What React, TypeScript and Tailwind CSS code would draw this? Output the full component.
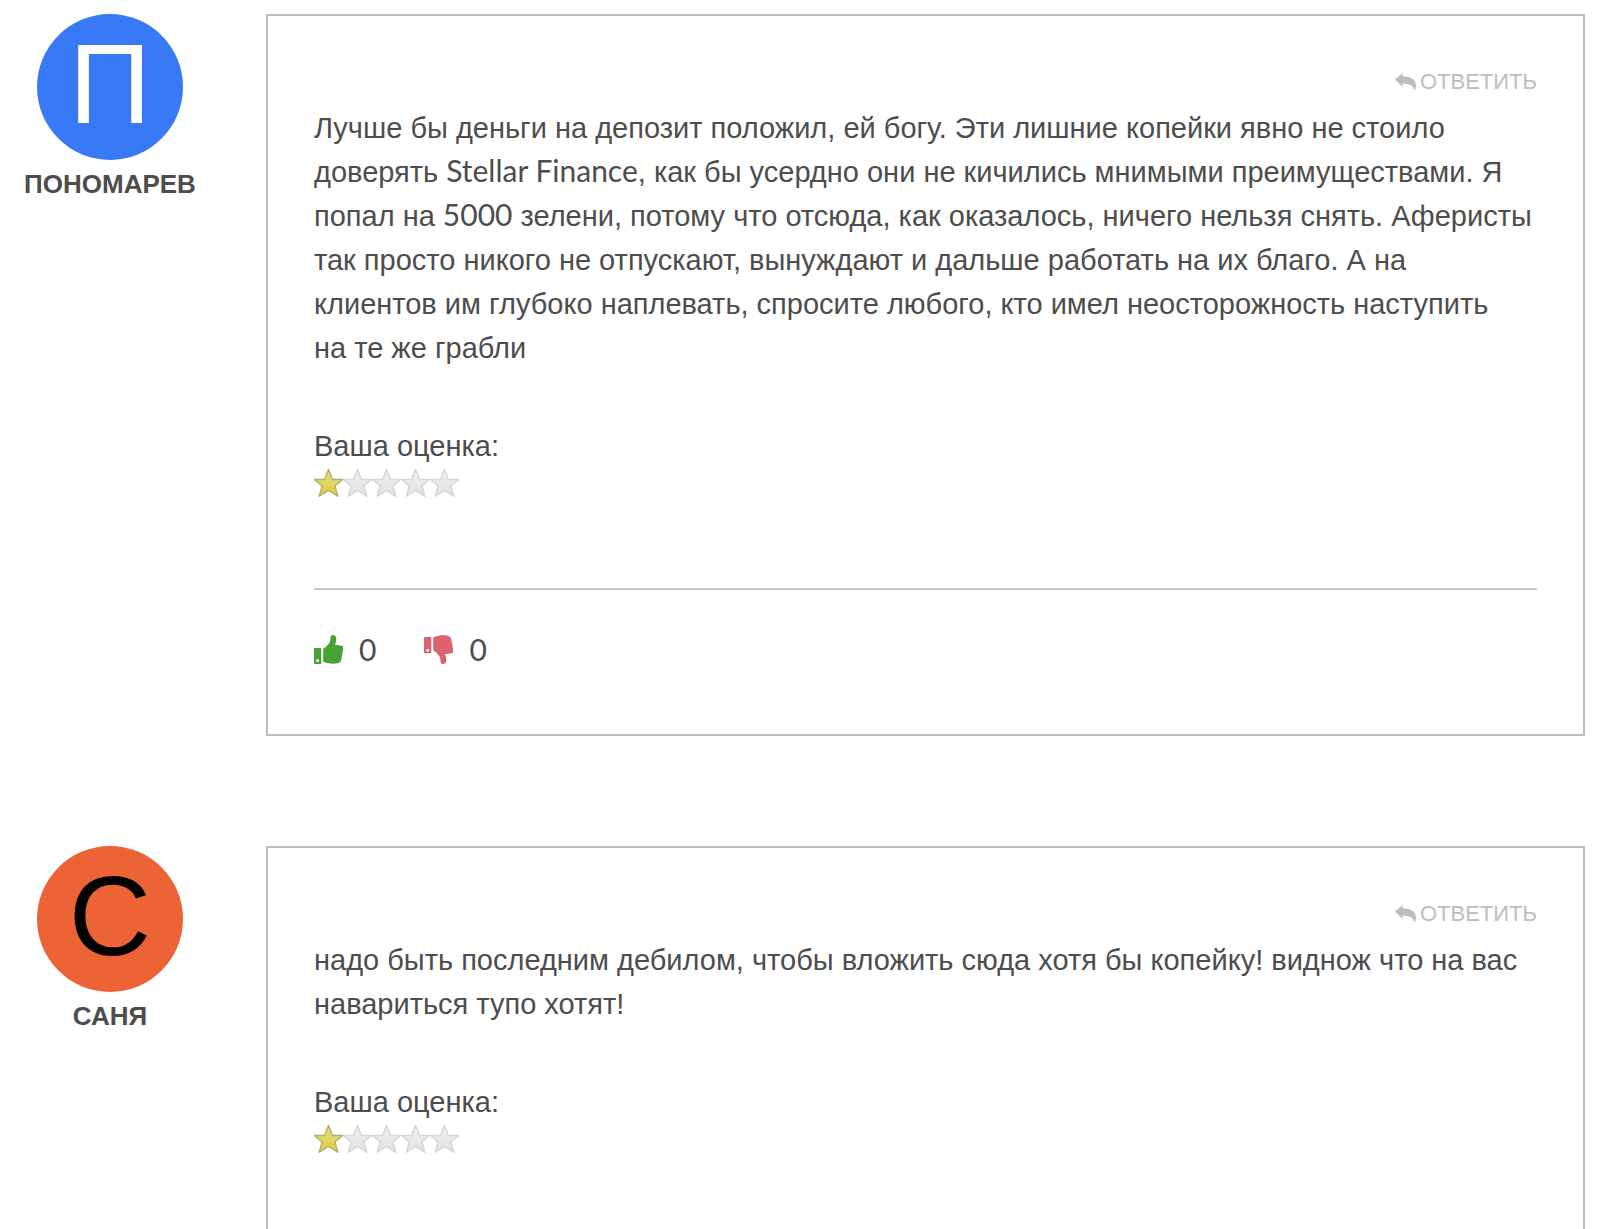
import React, { useState } from 'react';

interface Review {
  id: number;
  author: string;
  avatarClass: string;
  text: string;
  rating: number;
  likes: number;
  dislikes: number;
}

const reviews: Review[] = [
  {
    id: 1,
    author: 'Пономарев',
    avatarClass: 'bg-[#3879f6] text-white',
    text: 'Лучше бы деньги на депозит положил, ей богу. Эти лишние копейки явно не стоило доверять Stellar Finance, как бы усердно они не кичились мнимыми преимуществами. Я попал на 5000 зелени, потому что отсюда, как оказалось, ничего нельзя снять. Аферисты так просто никого не отпускают, вынуждают и дальше работать на их благо. А на клиентов им глубоко наплевать, спросите любого, кто имел неосторожность наступить на\u00a0те\u00a0же грабли',
    rating: 1,
    likes: 0,
    dislikes: 0,
  },
  {
    id: 2,
    author: 'Саня',
    avatarClass: 'bg-[#ec6336] text-black',
    text: 'надо быть последним дебилом, чтобы вложить сюда хотя бы копейку! виднож что на вас навариться тупо хотят!',
    rating: 1,
    likes: 0,
    dislikes: 0,
  },
];

const ReplyIcon = () => (
  <svg className="w-[21px] h-[18px]" viewBox="0 0 21 18" fill="currentColor" aria-hidden="true">
    <path d="M0 6.6 7.6 0v3.3c8 .1 13.4 3.300 13.4 9.300 0 1.900-.5 3.700-1.300 5.400-.5-4.600-4.200-7.300-12.100-7.500v3.600z" />
  </svg>
);

const ThumbUpIcon = () => (
  <svg className="w-[29px] h-[29px]" viewBox="0 0 29 29" aria-hidden="true">
    <path fill="#4aa135" d="M1 13h5.300q1 0 1 1v14q0 1-1 1H1q-1 0-1-1V14q0-1 1-1z" />
    <circle cx="3.700" cy="25.600" r="1.500" fill="#fff" />
    <path fill="#4aa135" d="M9.300 13.400c2.700-1.600 5.600-4.200 6.500-6.500.8-2 .3-4.700 1.500-6.300.8-1.100 3.700-.6 4.500 1.200.9 2.500.5 5.200-.9 7.900l6.900 1c1.300.3 1.700 1.600 1.300 2.700.2.600 0 1.300-.2 1.800l-.4 2.600-.4 2.700-.6 3.100-.6 2.400c-.6 1.600-2 1.900-3.700 2.300-4.400.8-8.700.3-13.100-1.300-.7-.3-1-.7-1-1.500z" />
  </svg>
);

const ThumbDownIcon = () => (
  <svg className="w-[29px] h-[29px]" viewBox="0 0 29 29" aria-hidden="true">
    <path fill="#db6370" d="M1 2h5.300q1 0 1 1v14.200q0 1-1 1H1q-1 0-1-1V3q0-1 1-1z" />
    <circle cx="3.700" cy="15.200" r="1.500" fill="#fff" />
    <path fill="#db6370" d="M9.300 15.600c2.700 1.600 5.600 4.200 6.500 6.500.8 2 .3 4.700 1.500 6.300.8 1.100 3.700.6 4.500-1.200.9-2.500.5-5.200-.9-7.900l6.900-1c1.300-.3 1.700-1.600 1.300-2.700.2-.6 0-1.300-.2-1.800l-.4-2.600-.4-2.700-.6-3.100-.6-2.400c-.6-1.600-2-1.900-3.700-2.300-4.400-.8-8.700-.3-13.100 1.300-.7.3-1 .7-1 1.500z" />
  </svg>
);

const Star: React.FC<{ active: boolean }> = ({ active }) => (
  <svg className="w-[29px] h-[29px]" viewBox="0 0 29 29" aria-hidden="true">
    <defs>
      <linearGradient id="starOn" x1="0" y1="0" x2="0" y2="1">
        <stop offset="0" stopColor="#e6dd86" />
        <stop offset="1" stopColor="#ddcf3f" />
      </linearGradient>
      <linearGradient id="starOff" x1="0" y1="0" x2="0" y2="1">
        <stop offset="0" stopColor="#f1f1f1" />
        <stop offset="1" stopColor="#e2e2e2" />
      </linearGradient>
    </defs>
    <path
      d="M14.500 1.500 18.300 11.500H28.500l-7.700 6.500 3 10.200-9.300-5.800-9.300 5.800 3-10.200L.5 11.500h10.200z"
      fill={active ? 'url(#starOn)' : 'url(#starOff)'}
      stroke={active ? '#b9ad68' : '#d6d6d6'}
      strokeWidth="1.500"
      strokeLinejoin="round"
    />
  </svg>
);

// Latin letters and digits use Lato, Cyrillic stays in the base font
const MixedText: React.FC<{ text: string }> = ({ text }) => (
  <>
    {text.split(/([A-Za-z0-9]+(?: [A-Za-z0-9]+)*)/).map((part, i) =>
      i % 2 ? (
        <span key={i} className="font-['Lato',sans-serif] text-[30px] leading-none">{part}</span>
      ) : (
        part
      )
    )}
  </>
);

const ReviewCard: React.FC<{ review: Review }> = ({ review }) => {
  const [likes, setLikes] = useState(review.likes);
  const [dislikes, setDislikes] = useState(review.dislikes);

  return (
    <article className="flex items-start gap-[46px]">
      <div className="w-[220px] shrink-0 flex flex-col items-center">
        <div
          className={`w-[146px] h-[146px] rounded-full flex justify-center text-[114px] leading-[140px] ${review.avatarClass}`}
        >
          {review.author.charAt(0)}
        </div>
        <h3 className="mt-2 text-[26px] leading-8 font-bold uppercase">{review.author}</h3>
      </div>

      <div className="flex-1 min-w-0 border-2 border-[#bdbdbd] px-[46px] pt-12 pb-[63px]">
        <div className="flex justify-end">
          <button type="button" className="flex items-center gap-1 text-[22px] leading-9 uppercase text-[#bdbdbd] cursor-pointer">
            <ReplyIcon />
            Ответить
          </button>
        </div>

        <p className="mt-1.5 pr-0.5">
          <MixedText text={review.text} />
        </p>

        <p className="mt-[54px]">Ваша оценка:</p>
        <div className="flex" role="img" aria-label={`${review.rating} из 5`}>
          {[1, 2, 3, 4, 5].map((n) => (
            <Star key={n} active={n <= review.rating} />
          ))}
        </div>

        <div className="mt-[91px] pt-[37px] border-t-2 border-[#cacaca] flex gap-12">
          <button type="button" onClick={() => setLikes(likes + 1)} className="h-11 flex items-center gap-4 cursor-pointer">
            <ThumbUpIcon />
            <MixedText text={String(likes)} />
          </button>
          <button type="button" onClick={() => setDislikes(dislikes + 1)} className="h-11 flex items-center gap-4 cursor-pointer">
            <ThumbDownIcon />
            <MixedText text={String(dislikes)} />
          </button>
        </div>
      </div>
    </article>
  );
};

const App: React.FC = () => {
  return (
    <main className="h-screen overflow-hidden bg-white pt-[14px] pr-[15px] font-['Liberation_Sans',sans-serif] text-[29px] leading-[44px] text-[#4d4d4d]">
      <div className="flex flex-col gap-[110px]">
        {reviews.map((review) => (
          <ReviewCard key={review.id} review={review} />
        ))}
      </div>
    </main>
  );
};

export default App;
